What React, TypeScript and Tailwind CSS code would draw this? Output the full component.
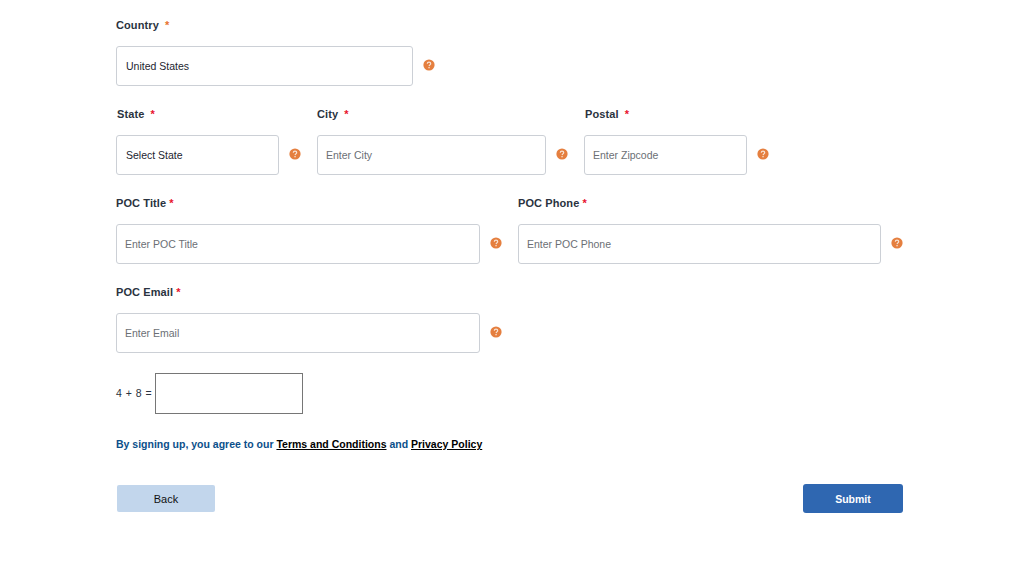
const fontStack = "font-['Liberation_Sans',Arial,sans-serif]";

function HelpIcon() {
  return (
    <svg width="12" height="12" viewBox="0 0 12 12" className="shrink-0">
      <circle cx="6" cy="6" r="5.6" fill="#e57f3f" />
      <path d="M4.3 4.7c0-1 .8-1.6 1.7-1.6s1.7.6 1.7 1.5c0 1.2-1.5 1.3-1.6 2.5" fill="none" stroke="#f8e3d4" strokeWidth="1.2" />
      <rect x="5.4" y="8" width="1.3" height="1.3" fill="#f8e3d4" />
    </svg>
  );
}

function Field({
  label,
  star,
  placeholder,
  value,
  width,
  gap,
  labelClass = "",
  starClass = "text-[#e8112d]",
}: {
  label: string;
  star: string;
  placeholder?: string;
  value?: string;
  width: string;
  gap?: string;
  labelClass?: string;
  starClass?: string;
}) {
  return (
    <div className={gap}>
      <div className={`h-[27px] text-[11px] leading-[13px] font-bold tracking-[0.1px] text-[#2a3340] ${labelClass}`}>
        {label}
        <span className={`${starClass} ${star}`}>*</span>
      </div>
      <div className="flex items-center">
        <div className={`${width} flex h-10 items-center rounded-[3px] border border-[#ccd0d6] bg-white pl-[9px] pt-px text-[10.5px]`}>
          {value ? (
            <span className="text-[#1c2530]">{value}</span>
          ) : (
            <span className="-ml-px text-[#6b6f75]">{placeholder}</span>
          )}
        </div>
        <div className="ml-[10px] -mt-[2px]">
          <HelpIcon />
        </div>
      </div>
    </div>
  );
}

export default function App() {
  return (
    <div className={`${fontStack} h-[561px] w-[1026px] overflow-hidden bg-white pl-[116px] pt-[19px]`}>
      <div className="flex h-[89px]">
        <Field label="Country" star="ml-[6px]" value="United States" width="w-[297px]" starClass="text-[#e8722d]" />
      </div>
      <div className="flex h-[89px]">
        <Field label="State" star="ml-[6px]" value="Select State" width="w-[163px]" labelClass="pl-px" />
        <Field label="City" star="ml-[6px]" placeholder="Enter City" width="w-[229px]" gap="ml-[16px]" />
        <Field label="Postal" star="ml-[6px]" placeholder="Enter Zipcode" width="w-[163px]" gap="ml-[16px]" labelClass="pl-px" />
      </div>
      <div className="flex h-[89px]">
        <Field label="POC Title" star="ml-[3px]" placeholder="Enter POC Title" width="w-[364px]" />
        <Field label="POC Phone" star="ml-[3px]" placeholder="Enter POC Phone" width="w-[363px]" gap="ml-[16px]" />
      </div>
      <div className="flex h-[87px]">
        <Field label="POC Email" star="ml-[3px]" placeholder="Enter Email" width="w-[364px]" />
      </div>

      <div className="flex items-center">
        <span className="w-[39px] text-[10.5px] tracking-[0.5px] text-[#2a3340]">4 + 8 =</span>
        <div className="h-[41px] w-[148px] border border-[#767676] bg-white" />
      </div>

      <p className="mt-[23px] text-[10.5px] leading-[14px] font-bold text-[#0b4f8a]">
        By signing up, you agree to our <span className="text-black underline">Terms and Conditions</span> and{" "}
        <span className="text-black underline">Privacy Policy</span>
      </p>

      <div className="mt-[33px] flex w-[787px] items-center justify-between">
        <button className="ml-px h-[27px] w-[98px] rounded-[2px] bg-[#c2d6ec] pt-px text-[11px] text-[#111111]">Back</button>
        <button className="h-[29px] w-[100px] rounded-[3px] bg-[#2f67b1] pt-[2px] text-[10.5px] font-bold text-white">Submit</button>
      </div>
    </div>
  );
}
